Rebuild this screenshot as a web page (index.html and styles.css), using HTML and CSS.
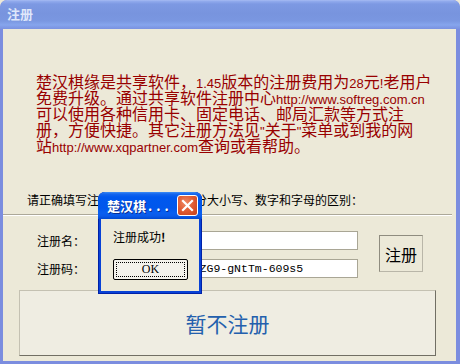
FILE: index.html
```html
<!DOCTYPE html>
<html lang="zh-CN">
<head>
<meta charset="utf-8">
<title>注册</title>
<link rel="stylesheet" href="styles.css">
</head>
<body>
<div class="window">
  <div class="titlebar"><span class="title">注册</span></div>
  <div class="client">
    <div class="notice">
      <span class="line">楚汉棋缘是共享软件，<span class="lat">1.45</span>版本的注册费用为<span class="lat">28</span>元<span class="lat">!</span>老用户</span>
      <span class="line">免费升级。通过共享软件注册中心<span class="lat">http://www.softreg.com.cn</span></span>
      <span class="line">可以使用各种信用卡、固定电话、邮局汇款等方式注</span>
      <span class="line">册，方便快捷。其它注册方法见<span class="lat">"</span>关于<span class="lat">"</span>菜单或到我的网</span>
      <span class="line">站<span class="lat">http://www.xqpartner.com</span>查询或看帮助。</span>
    </div>
    <p class="hint">请正确填写注册名和注册码，区分大小写、数字和字母的区别：</p>
    <div class="sep"></div>
    <div class="form">
      <div class="fields">
        <div class="row"><span class="label">注册名：</span><div class="field">棋友</div></div>
        <div class="row"><span class="label">注册码：</span><div class="field mono">Hk3Pw-qRt8Yae-ZG9-gNtTm-609s5</div></div>
      </div>
      <div class="reg">注册</div>
    </div>
    <div class="later">暂不注册</div>
  </div>

  <div class="msgbox">
    <div class="msg-title">
      <span class="msg-caption">楚汉棋<span class="dots">...</span></span>
      <span class="close">
        <svg width="13" height="13" viewBox="0 0 13 13"><path d="M2 2 L11 11 M11 2 L2 11" stroke="#fff" stroke-width="2.2" stroke-linecap="square"/></svg>
      </span>
    </div>
    <div class="msg-body">
      <p class="msg-text">注册成功<span class="bang">!</span></p>
      <div class="ok"><span class="ok-focus">OK</span></div>
    </div>
  </div>
</div>
</body>
</html>
```

FILE: styles.css
```css
* { box-sizing: border-box; }
html, body { margin: 0; padding: 0; }
body {
  width: 460px;
  height: 364px;
  overflow: hidden;
  background: #ECE9D8;
  font-family: "Noto Sans CJK SC", "Liberation Sans", sans-serif;
}
.window {
  position: relative;
  width: 460px;
  height: 364px;
  display: flex;
  flex-direction: column;
  background: #7b8ddf;
  border-radius: 7px 7px 0 0;
  padding: 0 4px 3px 3px;
  overflow: hidden;
}
.titlebar {
  flex: none;
  height: 29px;
  margin: 0 -4px 0 -3px;
  border-radius: 7px 7px 0 0;
  background: linear-gradient(to bottom, #aabef3 0, #93acee 1px, #7d99e3 4px, #7894de 14px, #7a97e1 21px, #86a5ed 25px, #7f9ae6 27px, #7a92e0 29px);
  padding: 6px 0 0 7px;
}
.title {
  display: block;
  color: #dfe7fa;
  font-size: 13px;
  font-weight: bold;
  line-height: 15px;
}
.client {
  flex: 1;
  min-height: 0;
  background: #ECE9D8;
  display: flex;
  flex-direction: column;
}
.notice {
  margin: 44px 0 0 33px;
  color: #980000;
  font-size: 16px;
  line-height: 16px;
}
.notice .line {
  display: flex;
  align-items: baseline;
  height: 16px;
  white-space: nowrap;
}
.lat { font-family: "Liberation Sans", sans-serif; font-size: 13px; line-height: 16px; }
.hint {
  margin: 40px 0 0 24px;
  height: 14px;
  font-size: 12px;
  line-height: 14px;
  color: #000;
  white-space: nowrap;
}
.sep {
  flex: none;
  margin: 7px 4px 0 0;
  height: 2px;
  border-top: 1px solid #ACA899;
  border-bottom: 1px solid #ffffff;
}
.form {
  margin: 15px 0 0 34px;
  display: flex;
  align-items: flex-start;
}
.fields {
  display: flex;
  flex-direction: column;
  gap: 9px;
}
.row {
  display: flex;
  align-items: center;
  height: 19px;
}
.label {
  width: 63px;
  font-size: 12px;
  line-height: 14px;
  color: #000;
}
.field {
  width: 258px;
  height: 19px;
  background: #fff;
  border: 1px solid #a9a695;
  padding: 0 2px;
  font-size: 12px;
  line-height: 17px;
  color: #000;
  white-space: nowrap;
  overflow: hidden;
}
.field.mono {
  font-family: "Liberation Mono", monospace;
  font-size: 11.5px;
}
.reg {
  margin: 4px 0 0 21px;
  width: 44px;
  height: 37px;
  border: 1px solid #8f8c7f;
  border-right-color: #b9b6a8;
  border-bottom-color: #b9b6a8;
  display: flex;
  align-items: center;
  justify-content: center;
  font-size: 16px;
  line-height: 18px;
  color: #000;
}
.later {
  flex: none;
  margin: 12px 0 0 16px;
  width: 417px;
  height: 66px;
  background: #EFEDE2;
  border: 1px solid #c4c1b2;
  border-right-color: #716f64;
  border-bottom-color: #716f64;
  display: flex;
  align-items: center;
  justify-content: center;
  font-size: 21px;
  line-height: 24px;
  color: #2360ad;
}

/* message box overlay */
.msgbox {
  position: absolute;
  left: 98px;
  top: 192px;
  width: 104px;
  height: 102px;
  display: flex;
  flex-direction: column;
  border-radius: 7px 7px 0 0;
  background: #0842d6;
  padding: 0 3px 3px 3px;
  box-shadow: inset 0 0 0 1px #0021a8;
}
.msg-title {
  flex: none;
  height: 27px;
  margin: 0 -3px;
  border-radius: 7px 7px 0 0;
  background: linear-gradient(to bottom, #3d8ef6 0, #1566ee 2px, #0058ee 5px, #0157ec 16px, #0a5ff0 21px, #0a5ae9 24px, #0048d0 27px);
  display: flex;
  align-items: center;
  padding: 0 4px 0 9px;
  justify-content: space-between;
}
.msg-caption {
  color: #fff;
  font-size: 13px;
  font-weight: bold;
  line-height: 15px;
  white-space: nowrap;
  text-shadow: 1px 1px 0 #0a2f93;
}
.dots { letter-spacing: 4px; margin-left: 2px; }
.close {
  width: 21px;
  height: 21px;
  border: 1px solid #fff;
  border-radius: 3px;
  background: radial-gradient(circle at 40% 35%, #ef8a66 0, #e05a31 50%, #c2401c 100%);
  display: flex;
  align-items: center;
  justify-content: center;
}
.msg-body {
  flex: 1;
  background: #ECE9D8;
  padding: 11px 0 0 12px;
}
.msg-text {
  margin: 0;
  font-size: 12px;
  line-height: 14px;
  color: #000;
}
.bang { font-weight: bold; }
.ok {
  margin-top: 15px;
  width: 75px;
  height: 21px;
  border: 1px solid #000;
  border-radius: 2px;
  background: #f3f2ec;
  padding: 2px;
  display: flex;
}
.ok-focus {
  flex: 1;
  border: 1px dotted #000;
  display: flex;
  align-items: center;
  justify-content: center;
  font-family: "Liberation Serif", serif;
  font-size: 12px;
  color: #000;
}
```
